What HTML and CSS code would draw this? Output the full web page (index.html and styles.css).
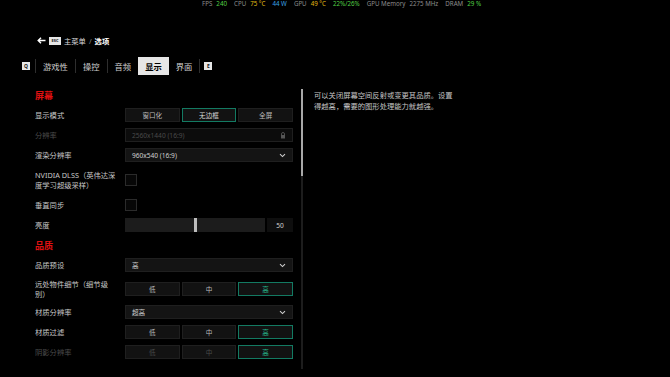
FILE: index.html
```html
<!DOCTYPE html>
<html lang="zh-CN">
<head>
  <meta charset="UTF-8">
  <meta name="viewport" content="width=device-width, initial-scale=1.0">
  <title>选项 - 显示</title>
  <link rel="stylesheet" href="styles.css">
</head>
<body>

  <div class="hud">
    <span class="k">FPS</span><span class="v green">240</span>
    <span class="k">CPU</span><span class="v yellow">75 °C</span><span class="v blue">44 W</span>
    <span class="k">GPU</span><span class="v yellow">49 °C</span><span class="v green">22%/26%</span>
    <span class="k">GPU Memory</span><span class="v">2275 MHz</span>
    <span class="k">DRAM</span><span class="v green">29 %</span>
  </div>

  <div class="crumbs">
    <svg class="back" width="9" height="7" viewBox="0 0 9 7">
      <path d="M8.5 3.5H1.5M4 0.8L1.2 3.5L4 6.2" fill="none" stroke="#fff" stroke-width="1.4"/>
    </svg>
    <span class="key wide">ESC</span>
    <span class="crumb">主菜单</span>
    <span class="slash">/</span>
    <span class="here">选项</span>
  </div>

  <nav class="tabs">
    <span class="key">Q</span>
    <span class="sep"></span>
    <span class="tab">游戏性</span>
    <span class="sep"></span>
    <span class="tab">操控</span>
    <span class="sep"></span>
    <span class="tab">音频</span>
    <span class="tab active">显示</span>
    <span class="tab">界面</span>
    <span class="sep"></span>
    <span class="key">E</span>
  </nav>

  <main class="content">
    <div class="settings">
      <h2 class="group-title">屏幕</h2>

      <div class="row">
        <span class="label">显示模式</span>
        <div class="seg">
          <span class="opt">窗口化</span>
          <span class="opt on light">无边框</span>
          <span class="opt">全屏</span>
        </div>
      </div>

      <div class="row off">
        <span class="label">分辨率</span>
        <div class="select">
          <span>2560x1440 (16:9)</span>
          <svg width="6" height="7" viewBox="0 0 6 7">
            <path d="M1.5 3V2a1.5 1.5 0 0 1 3 0v1" fill="none" stroke="#555" stroke-width="0.9"/>
            <rect x="1" y="3" width="4" height="3.5" fill="#555"/>
          </svg>
        </div>
      </div>

      <div class="row">
        <span class="label">渲染分辨率</span>
        <div class="select">
          <span>960x540 (16:9)</span>
          <svg width="7" height="5" viewBox="0 0 7 5"><path d="M1 1.2L3.5 3.6L6 1.2" fill="none" stroke="#ccc" stroke-width="1.1"/></svg>
        </div>
      </div>

      <div class="row tall first-tall">
        <span class="label">NVIDIA DLSS（英伟达深度学习超级采样）</span>
        <div class="control"><span class="check"></span></div>
      </div>

      <div class="row">
        <span class="label">垂直同步</span>
        <div class="control"><span class="check"></span></div>
      </div>

      <div class="row">
        <span class="label">亮度</span>
        <div class="slider">
          <div class="track"><span class="thumb" style="left: 49%"></span></div>
          <span class="value">50</span>
        </div>
      </div>

      <h2 class="group-title second">品质</h2>

      <div class="row">
        <span class="label">品质预设</span>
        <div class="select">
          <span>高</span>
          <svg width="7" height="5" viewBox="0 0 7 5"><path d="M1 1.2L3.5 3.6L6 1.2" fill="none" stroke="#ccc" stroke-width="1.1"/></svg>
        </div>
      </div>

      <div class="row tall">
        <span class="label">远处物件细节（细节级<br>别）</span>
        <div class="seg">
          <span class="opt">低</span>
          <span class="opt">中</span>
          <span class="opt on">高</span>
        </div>
      </div>

      <div class="row">
        <span class="label">材质分辨率</span>
        <div class="select">
          <span>超高</span>
          <svg width="7" height="5" viewBox="0 0 7 5"><path d="M1 1.2L3.5 3.6L6 1.2" fill="none" stroke="#ccc" stroke-width="1.1"/></svg>
        </div>
      </div>

      <div class="row">
        <span class="label">材质过滤</span>
        <div class="seg">
          <span class="opt">低</span>
          <span class="opt">中</span>
          <span class="opt on">高</span>
        </div>
      </div>

      <div class="row off">
        <span class="label">阴影分辨率</span>
        <div class="seg">
          <span class="opt">低</span>
          <span class="opt">中</span>
          <span class="opt on">高</span>
        </div>
      </div>
    </div>

    <div class="scroll"><div class="scroll-thumb"></div></div>

    <p class="desc">可以关闭屏幕空间反射或变更其品质。设置得越高，需要的图形处理能力就越强。</p>
  </main>

</body>
</html>
```

FILE: styles.css
```css
body {
  margin: 0;
  padding: 0;
  width: 670px;
  height: 377px;
  overflow: hidden;
  background-color: #000;
  color: #c8c8c8;
  font-family: 'Noto Sans', 'Noto Sans CJK SC', sans-serif;
}

/* performance overlay */
.hud {
  display: flex;
  align-items: center;
  height: 8px;
  padding-left: 202px;
  font-size: 6.2px;
  line-height: 8px;
  color: #8c8c8c;
  white-space: nowrap;
}
.hud .k {
  margin-right: 4px;
}
.hud .v {
  margin-right: 7px;
}
.green { color: #52d046; }
.yellow { color: #e0bd12; }
.blue { color: #3aa3e6; }

/* breadcrumb */
.crumbs {
  display: flex;
  align-items: center;
  height: 9px;
  margin-top: 28px;
  padding-left: 37px;
  font-size: 7.3px;
}
.crumbs .back {
  margin-right: 3px;
}
.key {
  display: inline-flex;
  align-items: center;
  justify-content: center;
  width: 8px;
  height: 8px;
  background-color: #e6e6e6;
  color: #111;
  font-size: 5px;
  font-weight: bold;
}
.key.wide {
  width: 12px;
  font-size: 4px;
  margin-right: 3px;
}
.crumb {
  color: #d8d8d8;
}
.slash {
  margin: 0 3px;
  color: #888;
}
.here {
  color: #fff;
  font-weight: bold;
}

/* tabs */
.tabs {
  display: flex;
  align-items: center;
  height: 18px;
  margin-top: 12px;
  padding-left: 22px;
  font-size: 8.3px;
}
.tabs .key {
  margin: 0 5px 0 0;
}
.tabs .key:last-child {
  margin: 0 0 0 4px;
}
.sep {
  width: 1px;
  height: 14px;
  background-color: #2e2e2e;
}
.tab {
  display: flex;
  align-items: center;
  height: 18px;
  padding: 0 7px;
  color: #cfcfcf;
}
.tab.active {
  background-color: #e6e6e6;
  color: #000;
  font-weight: bold;
}

/* settings list */
.content {
  display: flex;
  margin-top: 15px;
}
.settings {
  width: 258px;
  height: 286px;
  margin-left: 35px;
  display: flex;
  flex-direction: column;
  gap: 6px;
  overflow: hidden;
}
.group-title {
  margin: 0;
  height: 12px;
  line-height: 12px;
  font-size: 9px;
  font-weight: bold;
  color: #e01010;
}
.group-title.second {
  margin-top: 2px;
}
.row {
  display: flex;
  align-items: center;
  min-height: 14px;
  font-size: 7.3px;
}
.row.tall {
  min-height: 21px;
}
.row.first-tall {
  min-height: 24px;
}
.label {
  flex: 0 0 84px;
  margin-right: 6px;
  line-height: 10px;
}
.row.off .label,
.row.off .select span,
.row.off .opt {
  color: #4a4a4a;
}

.seg {
  flex: 1;
  display: grid;
  grid-template-columns: 1fr 1fr 1fr;
  gap: 2px;
}
.opt {
  display: flex;
  align-items: center;
  justify-content: center;
  height: 12px;
  border: 1px solid #1f1f1f;
  background-color: #121212;
  font-size: 6.6px;
  color: #bcbcbc;
}
.opt.on,
.row.off .opt.on {
  border-color: #137a62;
  color: #27b88e;
}
.opt.on.light {
  color: #d8d8d8;
}

.select {
  flex: 1;
  display: flex;
  align-items: center;
  justify-content: space-between;
  height: 12px;
  padding: 0 6px 0 6px;
  border: 1px solid #1f1f1f;
  background-color: #141414;
  font-size: 6.6px;
  color: #cfcfcf;
}
.row.off .select {
  background-color: #0c0c0c;
}

.control {
  flex: 1;
  display: flex;
}
.check {
  width: 10px;
  height: 10px;
  border: 1px solid #2b2b2b;
  background-color: #070707;
}

.slider {
  flex: 1;
  display: flex;
  gap: 2px;
  height: 14px;
}
.track {
  position: relative;
  flex: 1;
  background-color: #1c1c1c;
}
.thumb {
  position: absolute;
  top: 0;
  bottom: 0;
  width: 3px;
  background-color: #bdbdbd;
}
.value {
  display: flex;
  align-items: center;
  justify-content: center;
  width: 26px;
  background-color: #0e0e0e;
  font-size: 6.6px;
  color: #d0d0d0;
}

/* scrollbar and description */
.scroll {
  width: 2px;
  height: 280px;
  margin: -1px 0 0 8px;
  background-color: #1d1d1d;
}
.scroll-thumb {
  height: 87px;
  background-color: #a8a8a8;
}
.desc {
  width: 141px;
  margin: 0 0 0 11px;
  font-size: 7.3px;
  line-height: 11px;
  color: #c6c6c6;
}
```
